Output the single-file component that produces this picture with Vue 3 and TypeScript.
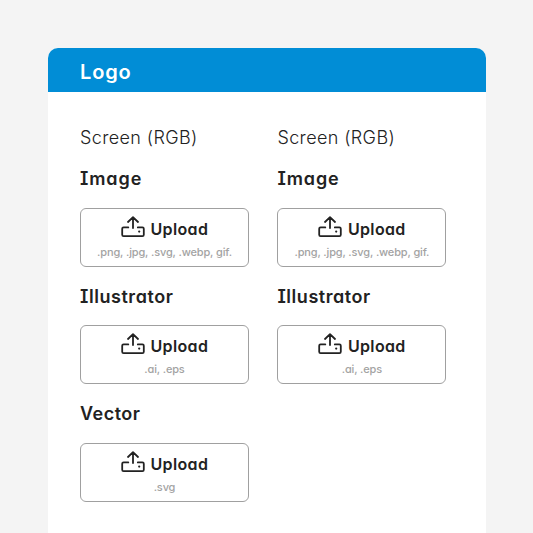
<script setup lang="ts">
interface Upload {
  title: string
  name: string
  formats: string
}

interface Column {
  label: string
  uploads: Upload[]
}

const image: Upload = { title: 'Image', name: 'image', formats: '.png, .jpg, .svg, .webp, gif.' }
const illustrator: Upload = { title: 'Illustrator', name: 'illustrator', formats: '.ai, .eps' }
const vector: Upload = { title: 'Vector', name: 'vector', formats: '.svg' }

const columns: Column[] = [
  { label: 'Screen (RGB)', uploads: [image, illustrator, vector] },
  { label: 'Screen (RGB)', uploads: [image, illustrator] }
]
</script>

<template>
  <div class="page">
    <section class="card">
      <header class="card-header">
        <span class="card-title">Logo</span>
      </header>
      <div class="card-body">
        <div v-for="(column, index) in columns" :key="index" class="column">
          <div class="column-label"><span>{{ column.label }}</span></div>
          <div v-for="item in column.uploads" :key="item.name" class="upload-group">
            <h3 class="upload-title" :class="'title-' + item.name">{{ item.title }}</h3>
            <button type="button" class="upload-button">
              <span class="upload-action">
                <svg class="upload-icon" width="24" height="22" viewBox="0 0 24 22">
                  <path d="M7.3 11.4H2.6Q1.2 11.4 1.2 12.8V18.8Q1.2 20.2 2.6 20.2H21.4Q22.8 20.2 22.8 18.8V12.8Q22.8 11.4 21.4 11.4H16.8" />
                  <path d="M12 12V1.6M7 6L12 1.2L17 6" />
                  <circle cx="18.2" cy="15.6" r="1.1" />
                </svg>
                <span class="upload-text">Upload</span>
              </span>
              <span class="upload-formats">{{ item.formats }}</span>
            </button>
          </div>
        </div>
      </div>
    </section>
  </div>
</template>

<style>
body {
  background-color: #f4f4f4;
}
</style>

<style scoped>
.page {
  box-sizing: border-box;
  height: 533px;
  padding: 48px 47.5px 0 48px;
  overflow: hidden;
  background-color: #f4f4f4;
  color: #222;
  font-family: Inter, "Liberation Sans", sans-serif;
  font-feature-settings: "cv08", "cv11";
}

.card {
  height: 600px;
  border-radius: 10px 10px 0 0;
  background-color: #fff;
  overflow: hidden;
}

.card-header {
  display: flex;
  align-items: center;
  box-sizing: border-box;
  height: 44px;
  padding: 3px 32px 0;
  background-color: #018dd6;
  color: #fff;
}

.card-title {
  font-size: 20px;
  font-weight: 600;
  line-height: 24px;
  letter-spacing: 0.85px;
}

.card-body {
  display: flex;
  gap: 28.4px;
  padding: 33px 32px 0;
}

.column {
  width: 169px;
}

.column-label {
  height: 26px;
  font-size: 18px;
  font-weight: 300;
  line-height: 26px;
  letter-spacing: 0.38px;
  white-space: nowrap;
}

.upload-group {
  height: 117.25px;
}

.column-label + .upload-group {
  margin-top: 15px;
}

.upload-title {
  height: 24px;
  margin: 0 0 18px;
  font-size: 18px;
  font-weight: 600;
  line-height: 26px;
}

.title-image {
  letter-spacing: 0.9px;
}

.title-illustrator {
  line-height: 28px;
  letter-spacing: 0.55px;
}

.title-vector {
  letter-spacing: 0.5px;
}

.upload-button {
  display: flex;
  flex-direction: column;
  align-items: center;
  box-sizing: border-box;
  width: 169px;
  height: 59px;
  padding: 7px 0 0;
  border: 1px solid #a0a0a0;
  border-radius: 6px;
  background-color: #fff;
  color: #222;
  font-family: inherit;
  font-feature-settings: inherit;
}

.upload-action {
  display: flex;
  gap: 6px;
  width: 88px;
  height: 28px;
}

.upload-icon {
  flex: none;
  fill: none;
  stroke: #222;
  stroke-width: 1.8;
  stroke-linecap: round;
  stroke-linejoin: round;
}

.upload-icon circle {
  fill: #222;
  stroke: none;
}

.upload-text {
  font-size: 16px;
  font-weight: 600;
  line-height: 26px;
  letter-spacing: 0.35px;
}

.upload-formats {
  color: #a3a3a3;
  font-size: 11px;
  font-weight: 500;
  line-height: 16px;
  letter-spacing: -0.14px;
  white-space: nowrap;
}
</style>
